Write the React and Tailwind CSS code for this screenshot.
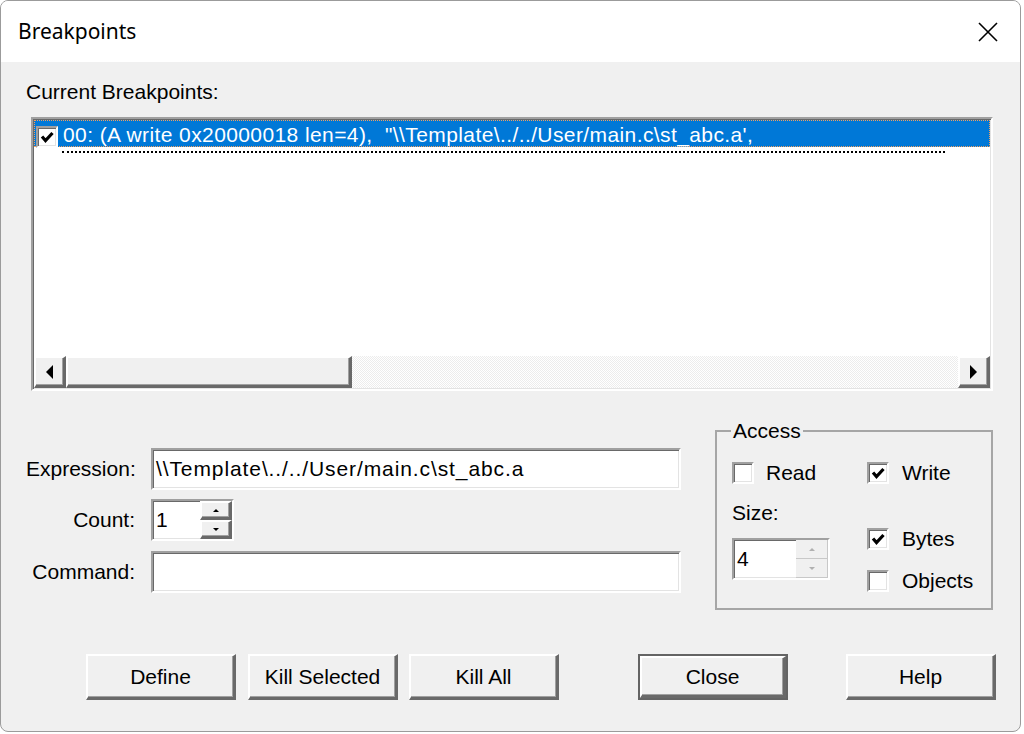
import React from "react";

// classic 3D edges
const raised =
  "bg-[#f0f0f0] border-t-2 border-l-2 border-t-white border-l-white border-b-[3px] border-r-[3px] border-b-[#696969] border-r-[#696969] shadow-[inset_-1px_-1px_0_#a0a0a0]";
const sunken =
  "border-t-2 border-l-2 border-t-[#a0a0a0] border-l-[#a0a0a0] border-b-2 border-r-2 border-b-white border-r-white shadow-[inset_1px_1px_0_#696969,inset_-1px_-1px_0_#e3e3e3]";

const CheckBox = ({ checked }) => (
  <span
    className={`w-[22px] h-[22px] shrink-0 bg-white flex items-center justify-center ${sunken}`}
  >
    {checked && (
      <svg width="14" height="14" viewBox="0 0 14 14">
        <path d="M2 6.5 L5.5 10.5 L12.5 3" stroke="#000" strokeWidth="3.2" fill="none" />
      </svg>
    )}
  </span>
);

const Tri = ({ dir, color = "#000", size = 6 }) => {
  const pts = {
    up: "0,5 5,0 10,5",
    down: "0,0 5,5 10,0",
    left: "5,0 0,5 5,10",
    right: "0,0 5,5 0,10",
  }[dir];
  const vb = dir === "up" || dir === "down" ? "0 0 10 5" : "0 0 5 10";
  const w = dir === "up" || dir === "down" ? size : size / 2 + 2;
  const h = dir === "up" || dir === "down" ? size / 2 : size + 4;
  return (
    <svg width={w} height={h} viewBox={vb}>
      <polygon points={pts} fill={color} />
    </svg>
  );
};

const Spinner = ({ value, width, disabled = false }) => (
  <div className={`flex h-[42px] bg-white ${sunken}`} style={{ width }}>
    <div className="flex-1 pl-[3px] flex items-center text-[21px] text-black">{value}</div>
    <div className="w-[32px] flex flex-col">
      <div
        className={`flex-1 flex items-center justify-center ${
          disabled
            ? "bg-[#f0f0f0] border-b border-r border-[#c8c8c8]"
            : raised
        }`}
      >
        <Tri dir="up" size={6} color={disabled ? "#b0b0b0" : "#000"} />
      </div>
      <div
        className={`flex-1 flex items-center justify-center ${
          disabled
            ? "bg-[#f0f0f0] border-b border-r border-[#c8c8c8]"
            : raised
        }`}
      >
        <Tri dir="down" size={6} color={disabled ? "#b0b0b0" : "#000"} />
      </div>
    </div>
  </div>
);

const Button = ({ children, isDefault = false, className = "" }) =>
  isDefault ? (
    <div className={`w-[150px] h-[46px] border-2 border-[#646464] ${className}`}>
      <div className={`w-full h-full flex items-center justify-center text-[21px] ${raised}`}>
        {children}
      </div>
    </div>
  ) : (
    <div
      className={`w-[150px] h-[46px] flex items-center justify-center text-[21px] ${raised} ${className}`}
    >
      {children}
    </div>
  );

const FormRow = ({ label, children, className = "" }) => (
  <div className={`flex items-center ${className}`}>
    <div className="w-[110px] text-right text-[21px] pr-[1px]">{label}</div>
    <div className="ml-[15px]">{children}</div>
  </div>
);

const App = () => {
  return (
    <div className="w-[1024px] h-[734px] bg-white overflow-hidden font-['Liberation_Sans',Arial,sans-serif] text-black">
      <div className="w-[1021px] h-[732px] rounded-[8px] border border-[#9b9b9b] overflow-hidden flex flex-col bg-[#f0f0f0]">
        {/* Title bar */}
        <div className="h-[61px] shrink-0 bg-white flex items-center justify-between pl-[17px] pr-[22px]">
          <span className="font-['Noto_Sans',sans-serif] text-[21px]">Breakpoints</span>
          <svg width="20" height="20" viewBox="0 0 20 20">
            <path d="M1 1 L19 19 M19 1 L1 19" stroke="#000" strokeWidth="1.6" />
          </svg>
        </div>

        {/* Body */}
        <div className="flex-1 pl-[25px] pt-[18px]">
          <div className="text-[21px] leading-[23px]">Current Breakpoints:</div>

          {/* Breakpoint list */}
          <div className={`mt-[14px] ml-[5px] w-[962px] h-[274px] bg-white flex flex-col ${sunken}`}>
            <div className="flex-1 pt-[1px] pl-[1px] pr-[1px]">
              <div className="relative h-[27px] bg-[#0078d7] border border-dotted border-[#f0a060] flex items-center">
                <div className="absolute left-[1px] top-[5px]">
                  <CheckBox checked />
                </div>
                <span className="ml-[28px] mt-[2px] text-white text-[21px] tracking-[0.4px] whitespace-pre">
                  {"00: (A write 0x20000018 len=4),  \"\\\\Template\\../../User/main.c\\st_abc.a',"}
                </span>
              </div>
              <div className="mt-[4px] ml-[28px] w-[883px] border-t-2 border-dotted border-black" />
            </div>

            {/* Horizontal scrollbar */}
            <div className="h-[32px] flex mx-[1px] mb-[1px]">
              <div className={`w-[32px] flex items-center justify-center ${raised}`}>
                <Tri dir="left" size={10} />
              </div>
              <div className={`w-[286px] ${raised}`} />
              <div className="flex-1 bg-[repeating-conic-gradient(#ffffff_0_25%,#ececec_0_50%)] bg-size-[2px_2px]" />
              <div className={`w-[32px] flex items-center justify-center ${raised}`}>
                <Tri dir="right" size={10} />
              </div>
            </div>
          </div>

          {/* Lower section */}
          <div className="mt-[39px] flex">
            <div className="pt-[18px] w-[655px]">
              <FormRow label="Expression:">
                <div className={`w-[530px] h-[42px] bg-white flex items-center pl-[3px] text-[21px] tracking-[0.9px] ${sunken}`}>
                  {"\\\\Template\\../../User/main.c\\st_abc.a"}
                </div>
              </FormRow>
              <FormRow label="Count:" className="mt-[9px]">
                <Spinner value="1" width={83} />
              </FormRow>
              <FormRow label="Command:" className="mt-[10px]">
                <div className={`w-[530px] h-[42px] bg-white ${sunken}`} />
              </FormRow>
            </div>

            {/* Access group */}
            <div className="relative ml-[34px] w-[278px] h-[180px] border-2 border-[#a6a6a6] flex pl-[15px] pt-[30px]">
              <span className="absolute -top-[13px] left-[14px] px-[2px] bg-[#f0f0f0] text-[21px] leading-[23px]">
                Access
              </span>
              <div className="w-[135px] flex flex-col">
                <div className="flex items-center h-[22px]">
                  <CheckBox />
                  <span className="ml-[12px] text-[21px]">Read</span>
                </div>
                <div className="mt-[17px] text-[21px] leading-[23px]">Size:</div>
                <div className="mt-[14px]">
                  <Spinner value="4" width={98} disabled />
                </div>
              </div>
              <div className="flex flex-col">
                <div className="flex items-center h-[22px]">
                  <CheckBox checked />
                  <span className="ml-[13px] text-[21px]">Write</span>
                </div>
                <div className="flex items-center h-[22px] mt-[44px]">
                  <CheckBox checked />
                  <span className="ml-[13px] text-[21px]">Bytes</span>
                </div>
                <div className="flex items-center h-[22px] mt-[20px]">
                  <CheckBox />
                  <span className="ml-[13px] text-[21px]">Objects</span>
                </div>
              </div>
            </div>
          </div>

          {/* Buttons */}
          <div className="mt-[44px] flex">
            <Button className="ml-[60px]">Define</Button>
            <Button className="ml-[12px]">Kill Selected</Button>
            <Button className="ml-[11px]">Kill All</Button>
            <Button isDefault className="ml-[79px]">Close</Button>
            <Button className="ml-[58px]">Help</Button>
          </div>
        </div>
      </div>
    </div>
  );
};

export default App;
